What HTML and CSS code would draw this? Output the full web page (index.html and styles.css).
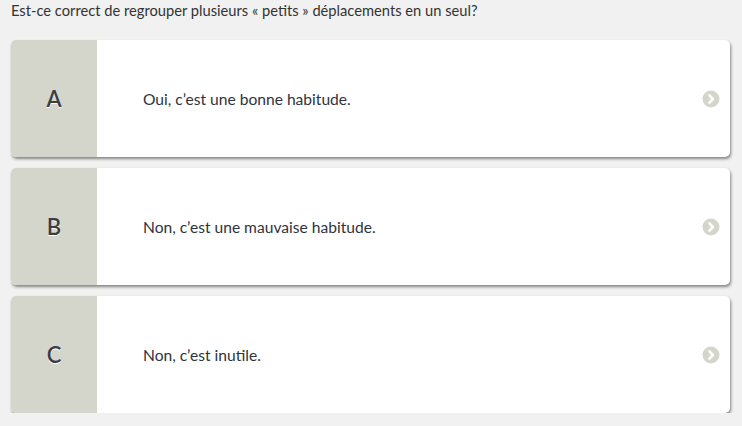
FILE: index.html
```html
<!DOCTYPE html>
<html lang="fr">
<head>
<meta charset="utf-8">
<link rel="stylesheet" href="styles.css">
</head>
<body>
<div class="quiz">
  <p class="question">Est-ce correct de regrouper plusieurs « petits » déplacements en un seul?</p>
  <div class="answers">
    <div class="answer">
      <div class="letter">A</div>
      <div class="text">Oui, c’est une bonne habitude.</div>
      <svg class="chev" width="18" height="18" viewBox="0 0 18 18"><circle cx="9" cy="9" r="8.5" fill="#d4d6cb"/><path d="M7.4 5.4 L10.9 9 L7.4 12.6" fill="none" stroke="#fff" stroke-width="2.6" stroke-linecap="round" stroke-linejoin="round"/></svg>
    </div>
    <div class="answer">
      <div class="letter">B</div>
      <div class="text">Non, c’est une mauvaise habitude.</div>
      <svg class="chev" width="18" height="18" viewBox="0 0 18 18"><circle cx="9" cy="9" r="8.5" fill="#d4d6cb"/><path d="M7.4 5.4 L10.9 9 L7.4 12.6" fill="none" stroke="#fff" stroke-width="2.6" stroke-linecap="round" stroke-linejoin="round"/></svg>
    </div>
    <div class="answer">
      <div class="letter">C</div>
      <div class="text">Non, c’est inutile.</div>
      <svg class="chev" width="18" height="18" viewBox="0 0 18 18"><circle cx="9" cy="9" r="8.5" fill="#d4d6cb"/><path d="M7.4 5.4 L10.9 9 L7.4 12.6" fill="none" stroke="#fff" stroke-width="2.6" stroke-linecap="round" stroke-linejoin="round"/></svg>
    </div>
  </div>
</div>
</body>
</html>
```
FILE: styles.css
```css
html, body {
  margin: 0;
  padding: 0;
  background: #f1f1f1;
}
body {
  font-family: Lato, "Open Sans", sans-serif;
  color: #2f3340;
}
.quiz {
  padding: 0 12px 0 11px;
}
.question {
  margin: 0;
  padding-top: 1px;
  font-size: 14.7px;
  line-height: 18px;
  color: #333;
}
.answers {
  margin-top: 21px;
  display: flex;
  flex-direction: column;
  gap: 11px;
}
.answer {
  display: flex;
  align-items: center;
  height: 117px;
  background: #fff;
  border-radius: 5px;
  overflow: hidden;
  box-shadow: 1px 2px 3px rgba(0, 0, 0, 0.45);
}
.letter {
  width: 86px;
  align-self: stretch;
  background: #d4d6cb;
  display: flex;
  align-items: center;
  justify-content: center;
  font-size: 22px;
  font-weight: 600;
  color: #3a3d45;
  text-shadow: 0 1px 0 #fff;
}
.text {
  flex: 1;
  padding-left: 46px;
  font-size: 15.6px;
  color: #2f3340;
}
.chev {
  margin-right: 10px;
  flex: none;
}
```
